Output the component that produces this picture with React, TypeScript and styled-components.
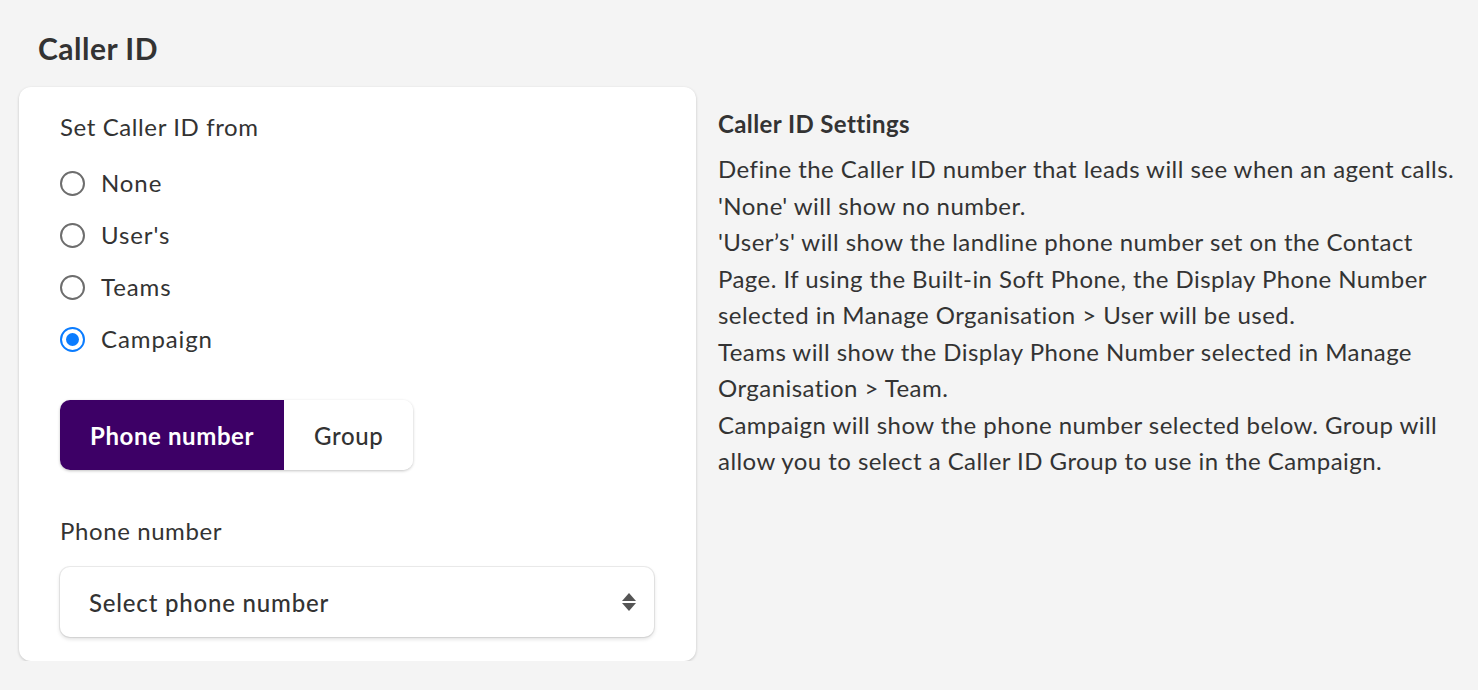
import React, { useState } from 'react'
import styled, { createGlobalStyle } from 'styled-components'

const TEXT = '#333333'
const PURPLE = '#3d0066'
const RADIO_BLUE = '#0a7cff'

const GlobalStyle = createGlobalStyle`
  body {
    margin: 0;
    background: #f4f4f4;
    font-family: Lato, 'Open Sans', sans-serif;
    color: ${TEXT};
  }
`

const Page = styled.div`
  padding: 28px 0 0 19px;
`

const Heading = styled.h1`
  margin: 0 0 19px 19px;
  font-size: 30px;
  line-height: 40px;
  font-weight: 700;
  letter-spacing: 0.5px;
`

const Layout = styled.div`
  display: flex;
  align-items: flex-start;
  gap: 22px;
`

const Card = styled.div`
  width: 677px;
  box-sizing: border-box;
  background: #fff;
  border-radius: 12px;
  box-shadow: 0 1px 3px rgba(0, 0, 0, 0.2);
  padding: 24px 41px 24px 41px;
`

const FieldLabel = styled.div`
  font-size: 24px;
  line-height: 32px;
  letter-spacing: 0.6px;
`

const RadioList = styled.div`
  display: flex;
  flex-direction: column;
  gap: 20px;
  margin: 24px 0 0 0;
`

const RadioRow = styled.label`
  display: flex;
  align-items: center;
  gap: 16px;
  font-size: 24px;
  line-height: 32px;
  letter-spacing: 0.9px;
  cursor: pointer;
`

const RadioCircle = styled.span<{ $checked: boolean }>`
  width: 25px;
  height: 25px;
  box-sizing: border-box;
  border-radius: 50%;
  border: 2px solid ${(p) => (p.$checked ? RADIO_BLUE : '#6d6d6d')};
  display: flex;
  align-items: center;
  justify-content: center;
  &::after {
    content: '';
    display: ${(p) => (p.$checked ? 'block' : 'none')};
    width: 13px;
    height: 13px;
    border-radius: 50%;
    background: ${RADIO_BLUE};
  }
`

const Segmented = styled.div`
  display: inline-flex;
  margin-top: 45px;
  border-radius: 10px;
  box-shadow: 0 1px 3px rgba(0, 0, 0, 0.24);
  overflow: hidden;
`

const SegButton = styled.button<{ $active: boolean }>`
  height: 70px;
  border: none;
  margin: 0;
  padding: 0 30px;
  font-family: inherit;
  font-size: 24px;
  letter-spacing: 0.6px;
  font-weight: ${(p) => (p.$active ? 700 : 500)};
  background: ${(p) => (p.$active ? PURPLE : '#fff')};
  color: ${(p) => (p.$active ? '#fff' : TEXT)};
  cursor: pointer;
`

const Block = styled.div`
  display: block;
  margin-top: 45px;
`

const SelectBox = styled.div`
  margin-top: 20px;
  width: 594px;
  height: 70px;
  box-sizing: border-box;
  border-radius: 10px;
  background: #fff;
  box-shadow: 0 0 0 1px rgba(0, 0, 0, 0.07), 0 2px 4px rgba(0, 0, 0, 0.14);
  display: flex;
  align-items: center;
  justify-content: space-between;
  padding: 0 16px 0 29px;
  font-size: 24px;
  font-weight: 500;
  letter-spacing: 0.8px;
`

const Help = styled.div`
  width: 745px;
  padding-top: 21px;
`

const HelpTitle = styled.div`
  font-size: 24px;
  line-height: 32px;
  font-weight: 700;
  letter-spacing: 0.4px;
  margin-bottom: 11px;
`

const HelpText = styled.p`
  margin: 0;
  font-size: 24px;
  line-height: 36.5px;
  letter-spacing: 0.45px;
`

const Arrows = () => (
  <svg width="18" height="22" viewBox="0 0 18 22">
    <path d="M9 2 L16 10 L2 10 Z" fill="#555" />
    <path d="M2 12 L16 12 L9 20 Z" fill="#555" />
  </svg>
)

const options = ['None', "User's", 'Teams', 'Campaign']

const App = () => {
  const [source, setSource] = useState('Campaign')
  const [mode, setMode] = useState('phone')
  return (
    <Page>
      <GlobalStyle />
      <Heading>Caller ID</Heading>
      <Layout>
        <Card>
          <FieldLabel>Set Caller ID from</FieldLabel>
          <RadioList>
            {options.map((o) => (
              <RadioRow key={o} onClick={() => setSource(o)}>
                <RadioCircle $checked={source === o} />
                {o}
              </RadioRow>
            ))}
          </RadioList>
          <Segmented>
            <SegButton $active={mode === 'phone'} onClick={() => setMode('phone')}>
              Phone number
            </SegButton>
            <SegButton $active={mode === 'group'} onClick={() => setMode('group')}>
              Group
            </SegButton>
          </Segmented>
          <Block>
            <FieldLabel>Phone number</FieldLabel>
            <SelectBox>
              Select phone number
              <Arrows />
            </SelectBox>
          </Block>
        </Card>
        <Help>
          <HelpTitle>Caller ID Settings</HelpTitle>
          <HelpText>
            Define the Caller ID number that leads will see when an agent calls.
            <br />
            'None' will show no number.
            <br />
            'User’s' will show the landline phone number set on the Contact Page. If using the
            Built-in Soft Phone, the Display Phone Number selected in Manage Organisation &gt; User
            will be used.
            <br />
            Teams will show the Display Phone Number selected in Manage Organisation &gt; Team.
            <br />
            Campaign will show the phone number selected below. Group will allow you to select a
            Caller ID Group to use in the Campaign.
          </HelpText>
        </Help>
      </Layout>
    </Page>
  )
}

export default App
